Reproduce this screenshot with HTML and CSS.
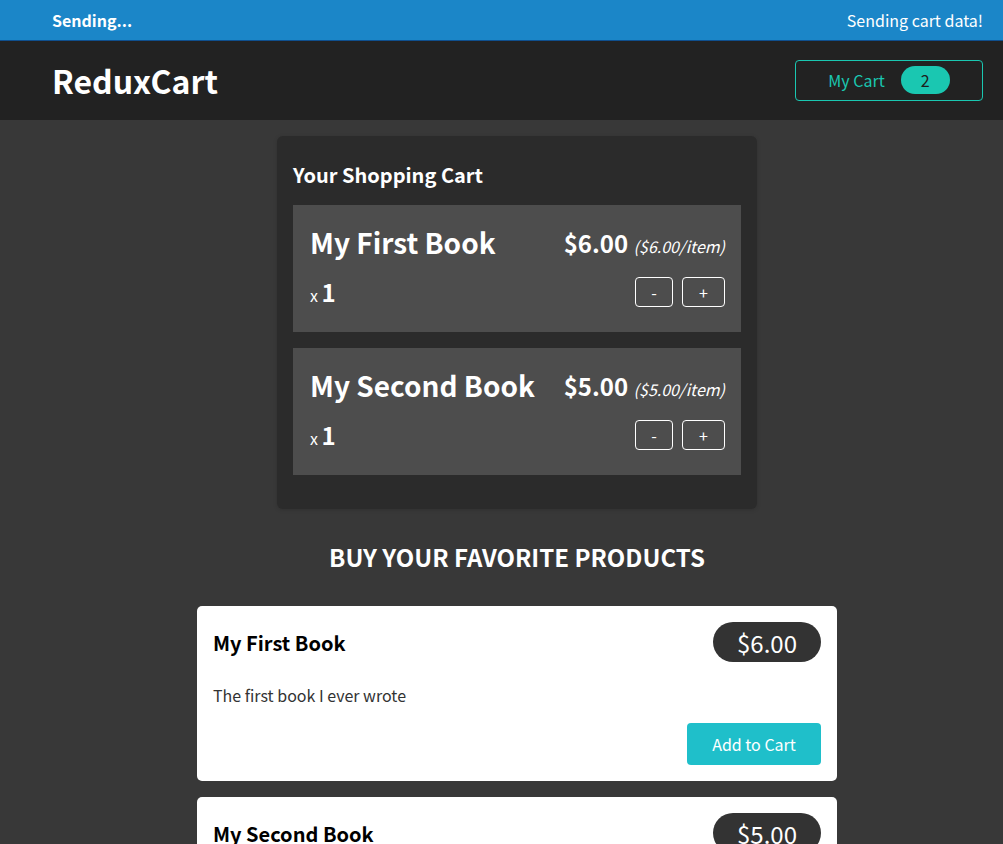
FILE: index.html
```html
<!DOCTYPE html>
<html lang="en">
<head>
<meta charset="utf-8">
<title>ReduxCart</title>
<link rel="stylesheet" href="styles.css">
</head>
<body>
<section class="notification">
  <h2>Sending...</h2>
  <p>Sending cart data!</p>
</section>
<header class="header">
  <h1>ReduxCart</h1>
  <button class="cart-button"><span>My Cart</span><span class="badge">2</span></button>
</header>
<main>
  <section class="cart">
    <h2>Your Shopping Cart</h2>
    <ul>
      <li class="cart-item">
        <header>
          <h3>My First Book</h3>
          <div class="price">$6.00 <span class="itemprice">($6.00/item)</span></div>
        </header>
        <div class="details">
          <div class="quantity">x <span>1</span></div>
          <div class="actions">
            <button>-</button>
            <button class="plus">+</button>
          </div>
        </div>
      </li>
      <li class="cart-item">
        <header>
          <h3>My Second Book</h3>
          <div class="price">$5.00 <span class="itemprice">($5.00/item)</span></div>
        </header>
        <div class="details">
          <div class="quantity">x <span>1</span></div>
          <div class="actions">
            <button>-</button>
            <button class="plus">+</button>
          </div>
        </div>
      </li>
    </ul>
  </section>
  <section class="products">
    <h2>Buy your favorite products</h2>
    <ul>
      <li class="product">
        <header>
          <h3>My First Book</h3>
          <div class="pprice">$6.00</div>
        </header>
        <p>The first book I ever wrote</p>
        <div class="pactions"><button>Add to Cart</button></div>
      </li>
      <li class="product">
        <header>
          <h3>My Second Book</h3>
          <div class="pprice">$5.00</div>
        </header>
        <p>The second book I ever wrote</p>
        <div class="pactions"><button>Add to Cart</button></div>
      </li>
    </ul>
  </section>
</main>
</body>
</html>
```
FILE: styles.css
```css
* { box-sizing: border-box; }
html { font-family: "Noto Sans CJK JP", "Noto Sans", sans-serif; }
body { margin: 0; background-color: #383838; height: 844px; overflow: hidden; }

.notification {
  height: 41px;
  background-color: #1b86c8;
  border-bottom: 1px solid #0f4f8e;
  display: flex;
  justify-content: space-between;
  align-items: center;
  padding: 0 20px 0 52px;
  color: #fff;
}
.notification h2 { margin: 0; font-size: 16px; font-weight: 700; }
.notification p { margin: 0; font-size: 16px; }

.header {
  height: 79px;
  background-color: #222;
  display: flex;
  justify-content: space-between;
  align-items: center;
  padding: 0 20px 1px 52px;
}
.header h1 { margin: 0; color: #fff; font-size: 32px; font-weight: 700; }

.cart-button {
  width: 188px;
  height: 41px;
  background: transparent;
  border: 1px solid #1ac7b1;
  border-radius: 4px;
  color: #1ac7b1;
  font-family: inherit;
  font-size: 16px;
  display: flex;
  align-items: center;
  justify-content: center;
  padding: 0;
}
.badge {
  background-color: #1ac7b1;
  color: #1d1d1d;
  border-radius: 30px;
  width: 49px;
  height: 28px;
  display: flex;
  align-items: center;
  justify-content: center;
  margin-left: 16px;
}

main { padding-left: 31px; }

.cart {
  width: 480px;
  margin: 16px auto;
  background-color: #2b2b2b;
  color: #fff;
  border-radius: 6px;
  padding: 16px 16px 18px;
  box-shadow: 0 1px 4px rgba(0,0,0,0.15);
}
.cart h2 { margin: 10px 0 0; font-size: 20px; line-height: 26px; font-weight: 700; }
.cart ul { list-style: none; margin: 0; padding: 0; }
.cart-item {
  margin: 16px 0;
  background-color: #4d4d4d;
  padding: 14px 16px 16px 17px;
  height: 127px;
}
.cart-item ul, .cart-item:first-child { margin-top: 17px; }
.cart-item header { display: flex; justify-content: space-between; align-items: center; white-space: nowrap; }
.cart-item h3 { margin: 0; font-size: 28px; line-height: 46px; font-weight: 700; }
.price { font-size: 24px; font-weight: 700; }
.itemprice { font-size: 16px; font-weight: 400; font-style: italic; }
.details { display: flex; justify-content: space-between; align-items: center; margin-top: 9px; }
.quantity { font-size: 16px; }
.quantity span { font-size: 24px; font-weight: 700; }
.actions { display: flex; gap: 9px; }
.actions button {
  width: 38px;
  height: 30px;
  background: transparent;
  border: 1px solid #fff;
  border-radius: 4px;
  color: #fff;
  font-family: inherit;
  font-size: 16px;
  padding: 0;
}
.actions button.plus { width: 43px; }

.products { width: 640px; margin: 0 auto; }
.products h2 {
  text-align: center;
  margin: 33px 0 34px;
  text-transform: uppercase;
  color: #fff;
  font-size: 24px;
  line-height: 30px;
  font-weight: 700;
}
.products ul { list-style: none; margin: 0; padding: 0; }
.product {
  background: #fff;
  border-radius: 5px;
  padding: 16px;
  margin-bottom: 16px;
}
.product header { display: flex; justify-content: space-between; align-items: center; }
.product h3 { margin: 0; font-size: 20px; font-weight: 700; color: #000; }
.pprice {
  background-color: #333;
  color: #fff;
  border-radius: 30px;
  height: 40px;
  padding: 0 24px;
  font-size: 24px;
  display: flex;
  align-items: center;
}
.product p { margin: 21px 0 16px; color: #333; font-size: 16px; line-height: 24px; }
.pactions { display: flex; justify-content: flex-end; }
.pactions button {
  background-color: #1fbfca;
  border: 0;
  border-radius: 4px;
  color: #fff;
  font-family: inherit;
  font-size: 16px;
  height: 42px;
  width: 134px;
  padding: 0;
}
```
